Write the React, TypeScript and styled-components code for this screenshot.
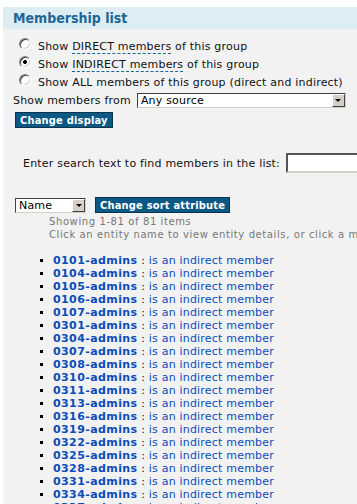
import styled, { createGlobalStyle } from 'styled-components';

const GlobalStyle = createGlobalStyle`
  html, body {
    margin: 0;
    background: #ffffff;
    overflow: hidden;
  }
  body {
    font-family: "DejaVu Sans", Verdana, sans-serif;
    font-size: 11px;
    letter-spacing: 0.2px;
    color: #111111;
  }
`;

const Page = styled.div`
  padding: 7px 0 0 3px;
  width: 420px;
`;

const Panel = styled.div`
  background: #f2f2f2;
  padding-bottom: 40px;
`;

const Header = styled.div`
  background: #deedf3;
  height: 22px;
  padding-left: 10px;

  h2 {
    margin: 0;
    font-family: "DejaVu Sans Condensed", "DejaVu Sans", sans-serif;
    font-size: 14px;
    line-height: 23px;
    font-weight: bold;
    letter-spacing: 0;
    color: #1b6796;
  }
`;

const Body = styled.div`
  padding: 8px 10px 0 10px;
`;

const RadioRow = styled.label`
  display: flex;
  align-items: center;
  height: 18px;
  padding-left: 6px;
  white-space: nowrap;
`;

const Radio = styled.input`
  appearance: none;
  width: 12px;
  height: 12px;
  margin: 0 7px 0 0;
  border-radius: 50%;
  background: #ffffff;
  border: 1px solid;
  border-color: #808080 #ffffff #ffffff #808080;
  box-shadow: inset 1px 1px 0 #404040, inset -1px -1px 0 #d4d0c8;
  position: relative;
  top: -2px;

  &:checked {
    background: radial-gradient(circle, #000 0 1.8px, #fff 2.2px);
  }
`;

const Abbr = styled.span`
  border-bottom: 1px dashed #1b6796;
`;

const FromRow = styled.div`
  display: flex;
  align-items: center;
  height: 18px;
  white-space: nowrap;
  gap: 6px;
`;

const SelectBox = styled.span<{ $width: number }>`
  display: inline-flex;
  width: ${p => p.$width}px;
  height: 15px;
  box-sizing: border-box;
  border: 1px solid;
  border-color: #404040 #d4d0c8 #d4d0c8 #404040;
  background: #ffffff;

  select {
    appearance: none;
    flex: 1;
    min-width: 0;
    border: none;
    background: transparent;
    font: inherit;
    font-size: 11px;
    letter-spacing: 0.2px;
    padding: 0 0 0 3px;
    margin: 0;
    color: #000;
    outline: none;
  }
`;

const Arrow = styled.span`
  width: 13px;
  box-sizing: border-box;
  background: #d4d0c8;
  border: 1px solid;
  border-color: #ffffff #404040 #404040 #ffffff;
  display: flex;
  align-items: center;
  justify-content: center;

  &::after {
    content: "";
    border-left: 3px solid transparent;
    border-right: 3px solid transparent;
    border-top: 3px solid #000;
  }
`;

const Button = styled.button`
  font-family: "DejaVu Sans Condensed", "DejaVu Sans", sans-serif;
  font-size: 11px;
  font-weight: bold;
  letter-spacing: 0.2px;
  color: #ffffff;
  background: #0b5884;
  border: 1px solid #08344f;
  height: 16px;
  padding: 0 4px;
  line-height: 13px;
  margin: 0;
  white-space: nowrap;
`;

const ButtonRow = styled.div`
  padding: 3px 0 0 2px;
`;

const SearchRow = styled.div`
  display: flex;
  align-items: center;
  gap: 6px;
  margin-top: 25px;
  padding-left: 10px;
  white-space: nowrap;
`;

const SearchInput = styled.input`
  width: 120px;
  height: 20px;
  box-sizing: border-box;
  margin: 0;
  border: 2px solid;
  border-color: #555555 #d4d0c8 #d4d0c8 #555555;
  background: #ffffff;
`;

const SortRow = styled.div`
  display: flex;
  align-items: center;
  gap: 9px;
  margin-top: 24px;
  padding-left: 2px;
`;

const Info = styled.div`
  padding: 2px 0 0 36px;
  font-size: 10px;
  line-height: 13px;
  color: #777777;
  letter-spacing: 0.6px;
  white-space: nowrap;
`;

const MemberList = styled.ul`
  list-style: square;
  margin: 13px 0 0 0;
  padding-left: 40px;
  line-height: 13px;

  li::marker {
    color: #000;
    font-size: 10px;
  }
`;

const Name = styled.a`
  font-weight: bold;
  color: #0b4cb8;
  text-decoration: none;
  letter-spacing: 0.4px;
`;

const Status = styled.a`
  color: #0b4cb8;
  text-decoration: none;
`;

const members = [
  '0101', '0104', '0105', '0106', '0107', '0301', '0304', '0307', '0308', '0310',
  '0311', '0313', '0316', '0319', '0322', '0325', '0328', '0331', '0334', '0337',
  '0340', '0343',
];

export default function App() {
  return (
    <>
      <GlobalStyle />
      <Page>
        <Panel>
          <Header>
            <h2>Membership list</h2>
          </Header>
          <Body>
            <RadioRow>
              <Radio type="radio" name="scope" />
              <span>Show <Abbr>DIRECT members</Abbr> of this group</span>
            </RadioRow>
            <RadioRow>
              <Radio type="radio" name="scope" defaultChecked />
              <span>Show <Abbr>INDIRECT members</Abbr> of this group</span>
            </RadioRow>
            <RadioRow>
              <Radio type="radio" name="scope" />
              <span>Show ALL members of this group (direct and indirect)</span>
            </RadioRow>
            <FromRow>
              <span>Show members from</span>
              <SelectBox $width={209}>
                <select defaultValue="any">
                  <option value="any">Any source</option>
                </select>
                <Arrow />
              </SelectBox>
            </FromRow>
            <ButtonRow>
              <Button>Change display</Button>
            </ButtonRow>
            <SearchRow>
              <span>Enter search text to find members in the list:</span>
              <SearchInput type="text" />
            </SearchRow>
            <SortRow>
              <SelectBox $width={71}>
                <select defaultValue="name">
                  <option value="name">Name</option>
                </select>
                <Arrow />
              </SelectBox>
              <Button>Change sort attribute</Button>
            </SortRow>
            <Info>
              <div>Showing 1-81 of 81 items</div>
              <div>Click an entity name to view entity details, or click a membership to view details</div>
            </Info>
            <MemberList>
              {members.map(m => (
                <li key={m}>
                  <Name href="#">{m}-admins</Name> : <Status href="#">is an indirect member</Status>
                </li>
              ))}
            </MemberList>
          </Body>
        </Panel>
      </Page>
    </>
  );
}
